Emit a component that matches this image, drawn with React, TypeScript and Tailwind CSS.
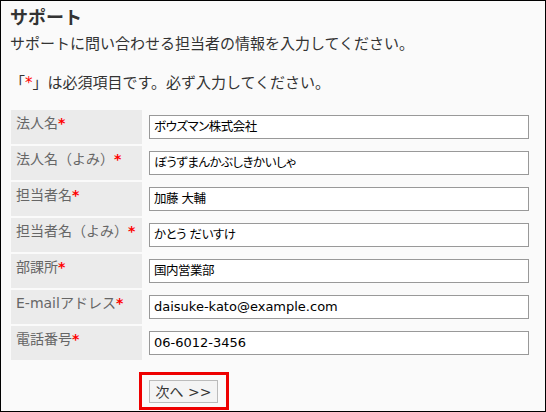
const fields = [
  { label: "法人名", value: "ボウズマン株式会社", ja: true },
  { label: "法人名（よみ）", value: "ぼうずまんかぶしきかいしゃ", ja: true },
  { label: "担当者名", value: "加藤 大輔", ja: true },
  { label: "担当者名（よみ）", value: "かとう だいすけ", ja: true },
  { label: "部課所", value: "国内営業部", ja: true },
  { label: "E-mailアドレス", value: "daisuke-kato@example.com", ja: false },
  { label: "電話番号", value: "06-6012-3456", ja: false },
];

const FieldRow = ({
  label,
  value,
  ja,
}: {
  label: string;
  value: string;
  ja: boolean;
}) => {
  return (
    <div className="flex items-start">
      <div className="w-[131px] h-[34px] bg-[#ebebeb] pl-[5px] pt-[6px] text-[14px] leading-[14px] text-[#666]">
        {label}
        <span className="text-[#f00] font-bold">*</span>
      </div>
      <div className="ml-[7px] mt-[5px] w-[380px] h-[24px] border border-[#999] bg-white flex items-center pl-[4px] text-black">
        {ja ? (
          <span className="text-[12.5px] tracking-[-0.5px] [font-feature-settings:'palt']">
            {value}
          </span>
        ) : (
          <span className="text-[13px]">{value}</span>
        )}
      </div>
    </div>
  );
};

export default function App() {
  return (
    <div
      className="w-[546px] h-[412px] overflow-hidden border border-black bg-[#fafafa] text-[#333]"
      style={{ fontFamily: '"DejaVu Sans", "Noto Sans CJK JP", sans-serif' }}
    >
      <div className="pl-[9px] pt-[8px]">
        <h1 className="text-[18px] leading-[18px] font-bold text-[#333]">
          サポート
        </h1>
        <p className="mt-[10px] text-[15px] leading-[15px]">
          サポートに問い合わせる担当者の情報を入力してください。
        </p>
        <p className="mt-[24px] text-[15px] leading-[15px]">
          「<span className="text-[#f00]">*</span>」は必須項目です。必ず入力してください。
        </p>
        <div className="mt-[19px] ml-[1px] flex flex-col gap-[2px]">
          {fields.map((f) => (
            <FieldRow key={f.label} label={f.label} value={f.value} ja={f.ja} />
          ))}
        </div>
        <div className="mt-[12px] ml-[129px] w-[90px] h-[38px] border-[3px] border-[#e00] flex items-start">
          <button className="ml-[7px] mt-[5px] w-[69px] h-[23px] border border-[#bbb] bg-[#f4f4f4] text-[14px] leading-[14px] text-[#333]">
            次へ &gt;&gt;
          </button>
        </div>
      </div>
    </div>
  );
}
